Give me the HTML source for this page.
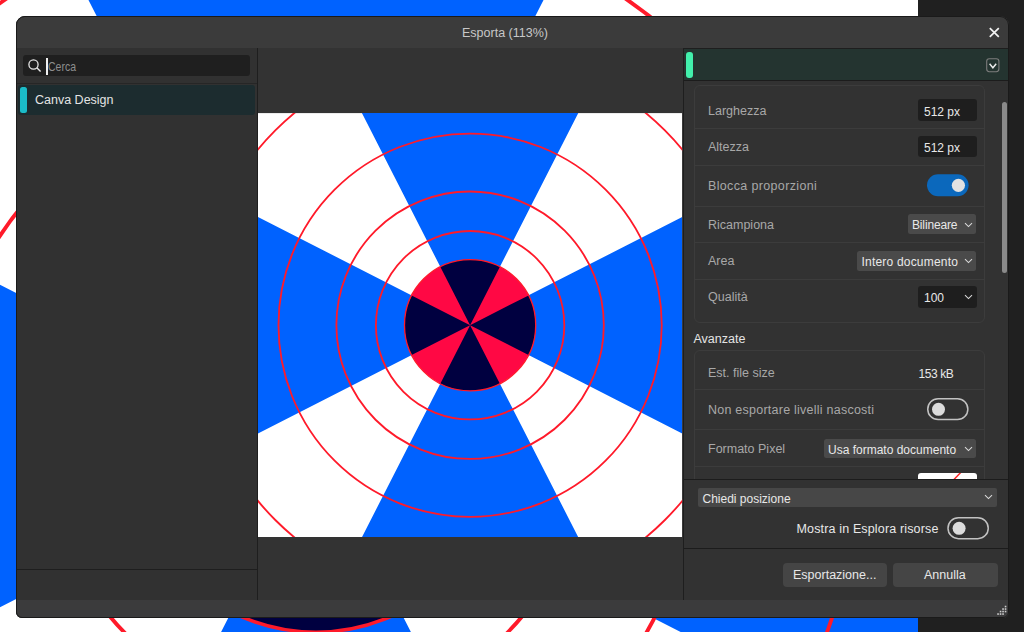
<!DOCTYPE html>
<html><head><meta charset="utf-8">
<style>
*{box-sizing:border-box;margin:0;padding:0}
html,body{width:1024px;height:632px;overflow:hidden;background:#202020;font-family:"Liberation Sans",sans-serif}
.abs{position:absolute}
.t{position:absolute;white-space:nowrap;line-height:1}
.lbl{font-size:12.5px;color:#a8a8a8}
.val{font-size:12px;color:#e8e8e8}
.inp{background:#1e1e1e;border-radius:3px}
.dd{background:#4a4a4a;border-radius:2.5px}
.btn{background:#454545;border-radius:4px}
</style></head><body>
<svg width="0" height="0" style="position:absolute">
<defs>
<symbol id="dsn" viewBox="0 0 512 512">
<rect width="512" height="512" fill="#fff"/>
<path fill="#0062ff" d="M256 256L125.4 0H386.6ZM256 256L125.4 512H386.6ZM256 256L0 125.4V386.6ZM256 256L512 125.4V386.6Z"/>
<circle cx="256" cy="256" r="79.2" fill="#ff0844"/>
<path fill="#000040" d="M256 256L220.02 185.44A79.2 79.2 0 0 1 291.98 185.44ZM256 256L220.02 326.56A79.2 79.2 0 0 0 291.98 326.56ZM256 256L185.44 220.02A79.2 79.2 0 0 0 185.44 291.98ZM256 256L326.56 220.02A79.2 79.2 0 0 1 326.56 291.98Z"/>
<g fill="none" stroke="#ff1a2a" stroke-width="2.2">
<circle cx="256" cy="256" r="79.2" stroke-width="1.6"/>
<circle cx="256" cy="256" r="113.7"/>
<circle cx="256" cy="256" r="161.4"/>
<circle cx="256" cy="256" r="231.3"/>
<circle cx="256" cy="256" r="332.5"/>
</g>
</symbol>
<symbol id="dsb" viewBox="0 0 512 512">
<rect width="512" height="512" fill="#fff"/>
<path fill="#0062ff" d="M256 256L125.4 0H386.6ZM256 256L125.4 512H386.6ZM256 256L0 125.4V386.6ZM256 256L512 125.4V386.6Z"/>
<circle cx="256" cy="256" r="79.2" fill="#ff0844"/>
<path fill="#000040" d="M256 256L220.02 185.44A79.2 79.2 0 0 1 291.98 185.44ZM256 256L220.02 326.56A79.2 79.2 0 0 0 291.98 326.56ZM256 256L185.44 220.02A79.2 79.2 0 0 0 185.44 291.98ZM256 256L326.56 220.02A79.2 79.2 0 0 1 326.56 291.98Z"/>
<g fill="none" stroke="#ff1a2a" stroke-width="1.65">
<circle cx="256" cy="256" r="79.2" stroke-width="1.5"/>
<circle cx="256" cy="256" r="113.7"/>
<circle cx="256" cy="256" r="161.4"/>
<circle cx="256" cy="256" r="231.3"/>
<circle cx="256" cy="256" r="332.5"/>
</g>
</symbol>
</defs>
</svg>

<!-- background canvas -->
<svg class="abs" style="left:-286px;top:-156px" width="1204" height="1204"><use href="#dsb" width="1204" height="1204"/></svg>

<!-- dialog -->
<div class="abs" id="dlg" style="left:16px;top:16px;width:993px;height:602px;background:#3d3d3d;border-radius:9px 9px 6px 6px;overflow:hidden">
  <!-- title bar -->
  <div class="abs" style="left:0;top:0;width:993px;height:32px;background:#3b3b3b"></div>
  <div class="t" style="left:446px;top:11px;font-size:12.5px;color:#c8c8c8">Esporta (113%)</div>
  <svg class="abs" style="left:972px;top:10px" width="12" height="12"><path d="M1.8 2.2L10.8 10.8M10.8 2.2L1.8 10.8" stroke="#f2f2f2" stroke-width="1.75"/></svg>

  <!-- left panel -->
  <div class="abs" style="left:0;top:32px;width:241px;height:552px;background:#313131"></div>
  <div class="abs" style="left:241px;top:32px;width:1px;height:552px;background:#1e1e1e"></div>
  <div class="abs" style="left:7px;top:39px;width:227px;height:21px;background:#1f1f1f;border-radius:3px"></div>
  <svg class="abs" style="left:11px;top:42px" width="16" height="16"><circle cx="6.5" cy="6.5" r="4.6" fill="none" stroke="#e6e6e6" stroke-width="1.3"/><path d="M9.8 9.8L13.6 13.6" stroke="#e6e6e6" stroke-width="1.4"/></svg>
  <div class="abs" style="left:30px;top:42px;width:1.6px;height:16.5px;background:#f0f0f0"></div>
  <div class="t" style="left:32.3px;top:45.3px;font-size:12.2px;color:#8e8e8e;transform:scaleX(0.86);transform-origin:0 0">Cerca</div>
  <div class="abs" style="left:0;top:67px;width:241px;height:1px;background:#262626"></div>
  <div class="abs" style="left:2px;top:69px;width:237px;height:30px;background:#1c2c2f;border-radius:3px"></div>
  <div class="abs" style="left:4px;top:71px;width:7px;height:26px;background:#1bbcc8;border-radius:2.5px"></div>
  <div class="t" style="left:19px;top:78.4px;font-size:12.5px;color:#e4e4e4">Canva Design</div>
  <div class="abs" style="left:0;top:553px;width:241px;height:1px;background:#1e1e1e"></div>

  <!-- preview -->
  <div class="abs" style="left:242px;top:32px;width:425px;height:552px;background:#333333"></div>
  <svg class="abs" style="left:242.4px;top:96.6px" width="424.2" height="424.4"><use href="#dsn" width="424.2" height="424.4"/></svg>

  <!-- right panel -->
  <div class="abs" style="left:667px;top:32px;width:1px;height:552px;background:#1e1e1e"></div>
  <div class="abs" style="left:668px;top:32px;width:325px;height:552px;background:#323232"></div>
  <div class="abs" style="left:668px;top:32px;width:325px;height:33px;background:#243430;border-top:1px solid #1e1e1e;border-bottom:1px solid #1c1c1c"></div>
  <div class="abs" style="left:670px;top:36px;width:7px;height:26px;background:#42f0ac;border-radius:3px"></div>
  <svg class="abs" style="left:969.6px;top:41.8px" width="15" height="15"><rect x="0.7" y="0.7" width="12.2" height="13" rx="2.6" fill="none" stroke="#7c7c7c" stroke-width="1.1"/><path d="M3.6 5.8L6.9 9.8L10.2 5.8" fill="none" stroke="#ececec" stroke-width="1.4"/></svg>

  <!-- card 1 -->
  <div class="abs" style="left:678px;top:69px;width:291px;height:237.5px;background:#323232;border:1px solid #3c3c3c;border-radius:6px"></div>
  <div class="abs" style="left:679px;top:112px;width:289px;height:1px;background:#3c3c3c"></div>
  <div class="abs" style="left:679px;top:149px;width:289px;height:1px;background:#3c3c3c"></div>
  <div class="abs" style="left:679px;top:190px;width:289px;height:1px;background:#3c3c3c"></div>
  <div class="abs" style="left:679px;top:226px;width:289px;height:1px;background:#3c3c3c"></div>
  <div class="abs" style="left:679px;top:263px;width:289px;height:1px;background:#3c3c3c"></div>

  <div class="t lbl" style="left:692px;top:89.4px">Larghezza</div>
  <div class="t lbl" style="left:692px;top:125.4px">Altezza</div>
  <div class="t lbl" style="left:692px;top:163.9px;letter-spacing:0.35px">Blocca proporzioni</div>
  <div class="t lbl" style="left:692px;top:203.4px">Ricampiona</div>
  <div class="t lbl" style="left:692px;top:239.4px">Area</div>
  <div class="t lbl" style="left:692px;top:275.4px">Qualità</div>

  <div class="abs inp" style="left:902px;top:83px;width:59px;height:22px"></div>
  <div class="t val" style="left:908px;top:90px">512 px</div>
  <div class="abs inp" style="left:902px;top:120px;width:59px;height:21px"></div>
  <div class="t val" style="left:908px;top:126px">512 px</div>

  
  

  <div class="abs dd" style="left:892px;top:198px;width:68px;height:20px"></div>
  <div class="t val" style="left:896px;top:203.4px;letter-spacing:-0.15px">Bilineare</div>
  <svg class="abs chev" style="left:947.5px;top:206px" width="10" height="6"><path d="M1 1.2L4.5 4.6L8 1.2" fill="none" stroke="#dadada" stroke-width="1.05"/></svg>

  <div class="abs dd" style="left:841px;top:234.5px;width:119px;height:20px"></div>
  <div class="t val" style="left:845.5px;top:239.6px;letter-spacing:0.2px">Intero documento</div>
  <svg class="abs chev" style="left:947.5px;top:242px" width="10" height="6"><path d="M1 1.2L4.5 4.6L8 1.2" fill="none" stroke="#dadada" stroke-width="1.05"/></svg>

  <div class="abs inp" style="left:902px;top:270px;width:59px;height:22px"></div>
  <div class="t val" style="left:908px;top:276px">100</div>
  <svg class="abs chev" style="left:948px;top:278px" width="10" height="6"><path d="M1 1.2L4.5 4.6L8 1.2" fill="none" stroke="#dadada" stroke-width="1.05"/></svg>

  <div class="t" style="left:677.5px;top:316.5px;font-size:12.5px;color:#e4e4e4">Avanzate</div>

  <!-- card 2 -->
  <div class="abs" style="left:678px;top:334px;width:291px;height:200px;background:#323232;border:1px solid #3c3c3c;border-radius:6px"></div>
  <div class="abs" style="left:679px;top:372.5px;width:289px;height:1px;background:#3c3c3c"></div>
  <div class="abs" style="left:679px;top:413px;width:289px;height:1px;background:#3c3c3c"></div>
  <div class="abs" style="left:679px;top:450px;width:289px;height:1px;background:#3c3c3c"></div>
  <div class="t lbl" style="left:692px;top:351.4px">Est. file size</div>
  <div class="t val" style="left:902.5px;top:352px;letter-spacing:-0.4px">153 kB</div>
  <div class="t lbl" style="left:692px;top:387.9px;letter-spacing:0.24px">Non esportare livelli nascosti</div>
  
  
  <div class="t lbl" style="left:692px;top:427.4px">Formato Pixel</div>
  <div class="abs dd" style="left:807.5px;top:422.5px;width:152px;height:19.5px"></div>
  <div class="t val" style="left:812px;top:428px">Usa formato documento</div>
  <svg class="abs chev" style="left:947.5px;top:430px" width="10" height="6"><path d="M1 1.2L4.5 4.6L8 1.2" fill="none" stroke="#dadada" stroke-width="1.05"/></svg>
  <div class="abs" style="left:902.2px;top:457.3px;width:58.6px;height:12px;background:#fff;border-radius:3px;overflow:hidden"><svg width="58" height="12" class="abs" style="left:0;top:0"><path d="M35 7.5L43 -0.8" stroke="#ff2020" stroke-width="1.4"/></svg></div>

  <!-- scrollbar -->
  <div class="abs" style="left:986px;top:85.5px;width:5px;height:171px;background:#8a8a8a;border-radius:3px"></div>

  <!-- bottom section -->
  <div class="abs" style="left:668px;top:463px;width:325px;height:121px;background:#323232"></div>
  <div class="abs" style="left:668px;top:463px;width:325px;height:1px;background:#1c1c1c"></div>
  <div class="abs dd" style="left:682px;top:471.8px;width:299px;height:19.6px;background:#474747;border-radius:2px"></div>
  <div class="t val" style="left:686.5px;top:477px">Chiedi posizione</div>
  <svg class="abs chev" style="left:968.2px;top:478.3px" width="10" height="6"><path d="M1 1.2L4.5 4.6L8 1.2" fill="none" stroke="#dadada" stroke-width="1.05"/></svg>
  <div class="t val" style="left:780.5px;top:507px;font-size:12.5px;letter-spacing:0.15px">Mostra in Esplora risorse</div>
  
  
  <div class="abs" style="left:668px;top:532px;width:325px;height:1px;background:#1c1c1c"></div>
  <div class="abs btn" style="left:766.5px;top:547px;width:104.5px;height:23.5px"></div>
  <div class="t val" style="left:777px;top:553px;font-size:12.5px">Esportazione...</div>
  <div class="abs btn" style="left:877px;top:547px;width:105px;height:23.5px"></div>
  <div class="t val" style="left:908px;top:553px;font-size:12.5px">Annulla</div>

  <!-- bottom strip -->
  <div class="abs" style="left:0;top:584px;width:993px;height:18px;background:#3b3b3c"></div>
  <svg class="abs" style="left:0;top:0" width="1024" height="632"><rect x="988.75" y="589.75" width="1.6" height="1.6" fill="#cfcfcf"/><rect x="986.25" y="592.25" width="1.6" height="1.6" fill="#cfcfcf"/><rect x="988.75" y="592.25" width="1.6" height="1.6" fill="#cfcfcf"/><rect x="983.75" y="594.75" width="1.6" height="1.6" fill="#cfcfcf"/><rect x="986.25" y="594.75" width="1.6" height="1.6" fill="#cfcfcf"/><rect x="988.75" y="594.75" width="1.6" height="1.6" fill="#cfcfcf"/><rect x="981.25" y="597.25" width="1.6" height="1.6" fill="#cfcfcf"/><rect x="983.75" y="597.25" width="1.6" height="1.6" fill="#cfcfcf"/><rect x="986.25" y="597.25" width="1.6" height="1.6" fill="#cfcfcf"/></svg>
</div>
<svg class="abs" style="left:0;top:0" width="1024" height="632">
<rect x="927" y="174.3" width="41.6" height="22" rx="11" fill="#0b68bc"/>
<circle cx="958.4" cy="185.3" r="6.6" fill="#e2e2e2"/>
<rect x="927.75" y="398.75" width="40.1" height="20.8" rx="10.4" fill="none" stroke="#c2c2c2" stroke-width="1.5"/>
<circle cx="938.5" cy="409.3" r="6.5" fill="#dcdcdc"/>
<rect x="948" y="517.75" width="40.25" height="20.9" rx="10.45" fill="none" stroke="#c2c2c2" stroke-width="1.5"/>
<circle cx="959.1" cy="528.3" r="6.5" fill="#dcdcdc"/>
</svg>
<div class="abs" style="left:16px;top:16px;width:993px;height:602px;border:1px solid #1a1a1a;border-radius:9px 9px 6px 6px;pointer-events:none"></div>
</body></html>
